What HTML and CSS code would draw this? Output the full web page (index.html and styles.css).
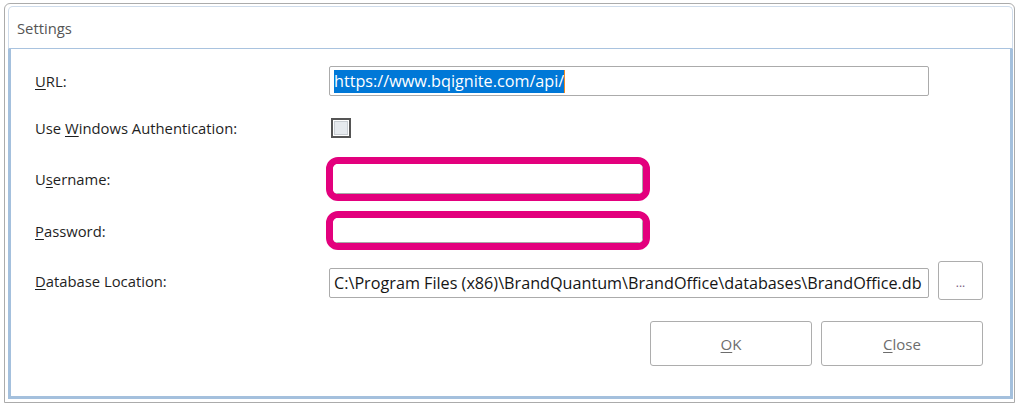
FILE: index.html
```html
<!DOCTYPE html>
<html>
<head>
<meta charset="utf-8">
<title>Settings</title>
<link rel="stylesheet" href="styles.css">
</head>
<body>
<div class="window">
  <div class="titlebar">Settings</div>
  <div class="content">
    <div class="row row-url">
      <div class="label"><u>U</u>RL:</div>
      <div class="field">
        <div class="textbox"><span class="selected">https://www.bqignite.com/api/</span></div>
      </div>
    </div>
    <div class="row row-auth">
      <div class="label">Use <u>W</u>indows Authentication:</div>
      <div class="field">
        <div class="checkbox"></div>
      </div>
    </div>
    <div class="row row-user">
      <div class="label">U<u>s</u>ername:</div>
      <div class="field">
        <div class="highlight"><div class="textbox inner"></div></div>
      </div>
    </div>
    <div class="row row-pass">
      <div class="label"><u>P</u>assword:</div>
      <div class="field">
        <div class="highlight"><div class="textbox inner"></div></div>
      </div>
    </div>
    <div class="row row-db">
      <div class="label"><u>D</u>atabase Location:</div>
      <div class="field field-db">
        <div class="textbox db">C:\Program Files (x86)\BrandQuantum\BrandOffice\databases\BrandOffice.db</div>
        <div class="button browse">...</div>
      </div>
    </div>
    <div class="actions">
      <div class="button action"><u>O</u>K</div>
      <div class="button action"><u>C</u>lose</div>
    </div>
  </div>
</div>
</body>
</html>
```
FILE: styles.css
```css
html, body {
  margin: 0;
  padding: 0;
  background: #ffffff;
}

body {
  font-family: "Open Sans", "Noto Sans", sans-serif;
  color: #1f1f1f;
}

.window {
  box-sizing: border-box;
  width: 1011px;
  height: 400px;
  margin: 3px 0 0 4px;
  border: 1px solid #ababab;
  border-radius: 6px 6px 0 0;
  padding: 2px 1px 3px 3px;
  display: flex;
  flex-direction: column;
  background: #ffffff;
}

.titlebar {
  box-sizing: border-box;
  height: 43px;
  border: 1px solid #cfdceb;
  border-bottom-color: #a9c3df;
  border-radius: 5px 5px 0 0;
  padding-left: 8px;
  display: flex;
  align-items: center;
  font-size: 14.8px;
  color: #555555;
}

.content {
  flex: 1;
  border: 3px solid #a4c0dd;
  border-top: 0;
  padding: 17px 27px 0 24px;
  display: flex;
  flex-direction: column;
}

.row {
  display: flex;
  align-items: center;
}

.row-url  { height: 30px; }
.row-auth { height: 30px; margin-top: 17px; }
.row-user { height: 44px; margin-top: 14px; }
.row-pass { height: 39px; margin-top: 10px; }
.row-db   { height: 39px; margin-top: 11px; }

.label {
  width: 294px;
  flex: none;
  font-size: 14.8px;
  color: #1f1f1f;
}

u {
  text-underline-offset: 2px;
}

.field {
  display: flex;
  align-items: center;
  height: 100%;
}

.textbox {
  box-sizing: border-box;
  width: 600px;
  height: 30px;
  border: 1px solid #ababab;
  border-radius: 2px;
  padding: 0 0 0 4px;
  font-size: 16.2px;
  color: #151515;
  display: flex;
  align-items: center;
  white-space: nowrap;
  background: #ffffff;
}

.selected {
  background: #0078d7;
  color: #ffffff;
  line-height: 23px;
  border-right: 1px solid #f08a24;
}

.checkbox {
  box-sizing: border-box;
  width: 20px;
  height: 20px;
  margin-left: 2px;
  border: 2px solid #555555;
  background: #e6eaee;
  box-shadow: inset 0 0 0 1px #ffffff, inset 0 0 0 2px #c8cdd2;
}

.highlight {
  box-sizing: border-box;
  margin-left: -3px;
  width: 324px;
  height: 100%;
  border: 7px solid #e3007d;
  border-radius: 12px;
  overflow: hidden;
  display: flex;
}

.textbox.inner {
  width: 100%;
  height: 100%;
  border: 0;
  border-right: 1px solid #a8a8a8;
  border-bottom: 1px solid #a8a8a8;
  border-radius: 3px;
}

.field-db {
  gap: 9px;
}

.textbox.db {
  align-self: flex-end;
  margin-bottom: 2px;
}

.button {
  box-sizing: border-box;
  border: 1px solid #adadad;
  border-radius: 3px;
  background: #ffffff;
  display: flex;
  align-items: center;
  justify-content: center;
  color: #6d6d6d;
}

.browse {
  width: 45px;
  height: 39px;
  font-size: 12px;
  color: #7a5c80;
  padding-top: 4px;
}

.actions {
  margin-top: 21px;
  display: flex;
  justify-content: flex-end;
  gap: 9px;
}

.action {
  width: 162px;
  height: 45px;
  font-size: 15px;
}
```
